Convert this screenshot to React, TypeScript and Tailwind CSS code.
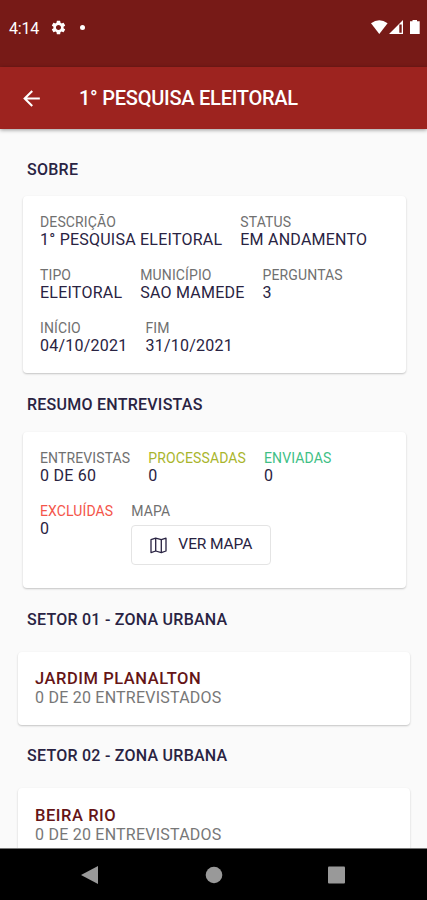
import clsx from "clsx";
import { MdArrowBack, MdSettings } from "react-icons/md";

type Info = {
  label: string;
  value?: string;
  color?: string;
};

const about: Info[][] = [
  [
    { label: "DESCRIÇÃO", value: "1° PESQUISA ELEITORAL" },
    { label: "STATUS", value: "EM ANDAMENTO" },
  ],
  [
    { label: "TIPO", value: "ELEITORAL" },
    { label: "MUNICÍPIO", value: "SAO MAMEDE" },
    { label: "PERGUNTAS", value: "3" },
  ],
  [
    { label: "INÍCIO", value: "04/10/2021" },
    { label: "FIM", value: "31/10/2021" },
  ],
];

const sectors = [
  { title: "SETOR 01 - ZONA URBANA", name: "JARDIM PLANALTON", progress: "0 DE 20 ENTREVISTADOS" },
  { title: "SETOR 02 - ZONA URBANA", name: "BEIRA RIO", progress: "0 DE 20 ENTREVISTADOS" },
];

function StatusBar() {
  return (
    <div className="flex h-[67px] shrink-0 items-start bg-[#771a17] pt-[18px] pl-[9px] pr-[7px] text-white">
      <span className="w-[41px] text-[16px] leading-[21px] tracking-[-0.2px]">4:14</span>
      <MdSettings className="mt-px size-[17px]" />
      <span className="mt-[7px] ml-[13px] size-[5px] rounded-full bg-white" />
      <svg className="mt-[2px] ml-auto h-[15px] w-[49px]" viewBox="0 0 49 15" fill="currentColor">
        <path d="M0 3.2Q8.300 -2.800 16.600 3.2L8.300 14Z" />
        <path d="M32 0V14H18ZM30.700 4.500H28.300V12.700H30.700Z" fillRule="evenodd" />
        <path d="M41.500 0H46V1.300H48.700V14H39V1.300H41.500Z" />
      </svg>
    </div>
  );
}

function Header() {
  return (
    <header className="z-10 flex h-[62px] shrink-0 items-center bg-[#9d231f] pl-[19px] text-white shadow-[0_1px_4px_rgba(0,0,0,0.4)]">
      <MdArrowBack className="size-[25px]" />
      <h1 className="ml-[35px] text-[20px] font-medium tracking-[-0.25px]">1° PESQUISA ELEITORAL</h1>
    </header>
  );
}

function InfoItem({ label, value, color = "text-[#707070]" }: Info) {
  return (
    <div>
      <p className={clsx("text-[14px] leading-[17px] tracking-[0.12px]", color)}>{label}</p>
      {value && <p className="text-[16px] leading-[18px] tracking-[0.23px] text-[#292342]">{value}</p>}
    </div>
  );
}

function SectionTitle({ children }: { children: string }) {
  return <h2 className="pl-[27px] text-[16px] leading-[20px] font-medium tracking-[0.25px] text-[#292342]">{children}</h2>;
}

function MapIcon() {
  return (
    <svg className="h-[17px] w-[17px]" viewBox="0 0 17 17" fill="none" stroke="currentColor" strokeWidth="1.3" strokeLinejoin="round">
      <path d="M1 2.700L5.700 1.200L11.300 2.700L16 1.200V14L11.300 15.600L5.700 14L1 15.600Z" />
      <path d="M5.700 1.200V14M11.300 2.700V15.600" />
    </svg>
  );
}

const card = "rounded-[4px] bg-white shadow-[0_1px_2px_rgba(0,0,0,0.22)]";

export default function App() {
  return (
    <div className="flex h-[900px] w-[427px] flex-col overflow-hidden bg-[#fafafa] font-[Roboto,sans-serif]">
      <StatusBar />
      <Header />

      <main className="min-h-0 flex-1 overflow-hidden pt-[31px]">
        <SectionTitle>SOBRE</SectionTitle>
        <section className={clsx(card, "mt-[16px] mr-[21px] ml-[23px] flex h-[177px] flex-col gap-[18px] pt-[18px] pl-[17px]")}>
          {about.map((row, i) => (
            <div key={i} className="flex gap-[18px]">
              {row.map((item) => (
                <InfoItem key={item.label} {...item} />
              ))}
            </div>
          ))}
        </section>

        <div className="mt-[22px]">
          <SectionTitle>RESUMO ENTREVISTAS</SectionTitle>
        </div>
        <section className={clsx(card, "mt-[17px] mr-[21px] ml-[23px] flex h-[156px] flex-col gap-[18px] pt-[18px] pl-[17px]")}>
          <div className="flex gap-[18px]">
            <InfoItem label="ENTREVISTAS" value="0 DE 60" />
            <InfoItem label="PROCESSADAS" value="0" color="text-[#a9b52c]" />
            <InfoItem label="ENVIADAS" value="0" color="text-[#3fbf86]" />
          </div>
          <div className="flex gap-[18px]">
            <InfoItem label="EXCLUÍDAS" value="0" color="text-[#f4554a]" />
            <div>
              <InfoItem label="MAPA" />
              <button className="mt-[5px] flex h-[40px] w-[140px] items-center justify-center gap-[11px] rounded-[4px] border border-[#e4e4e4] text-[15.5px] tracking-[-0.1px] text-[#292342]">
                <MapIcon />
                VER MAPA
              </button>
            </div>
          </div>
        </section>

        {/* Sectors */}
        {sectors.map((sector) => (
          <div key={sector.title} className="mt-[21.5px]">
            <SectionTitle>{sector.title}</SectionTitle>
            <section className={clsx(card, "mt-[22px] mr-[17px] ml-[18px] h-[73px] pt-[17.5px] pl-[17px]")}>
              <h3 className="text-[16.5px] leading-[19px] font-medium tracking-[0.55px] text-[#651517]">{sector.name}</h3>
              <p className="text-[16px] leading-[19px] tracking-[0.23px] text-[#777]">{sector.progress}</p>
            </section>
          </div>
        ))}
      </main>

      <nav className="flex h-[52px] shrink-0 items-center border-t border-[#777] bg-black text-[#999]">
        <svg className="h-[20px] w-full" viewBox="0 0 427 20" fill="currentColor">
          <path d="M81 10L98 1V19Z" />
          <circle cx="214" cy="10" r="8.300" />
          <rect x="328" y="1.500" width="17" height="17" rx="1" />
        </svg>
      </nav>
    </div>
  );
}
